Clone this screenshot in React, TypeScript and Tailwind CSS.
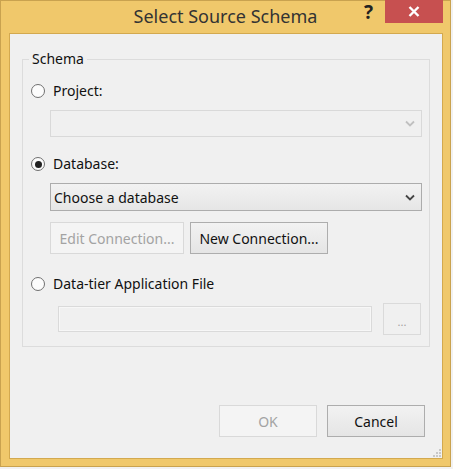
import React from "react";

const font = { fontFamily: '"Noto Sans", "Open Sans", sans-serif' };

function Radio({ checked, label }: { checked?: boolean; label: string }) {
	return (
		<div className="flex items-center h-[20px]">
			<span className="w-[14px] h-[14px] rounded-full border border-[#707070] bg-[#fcfcfc] flex items-center justify-center">
				{checked && <span className="w-[7px] h-[7px] rounded-full bg-[#222]" />}
			</span>
			<span className="ml-[8px] text-[14px] text-[#111] leading-[20px]">{label}</span>
		</div>
	);
}

function Chevron({ disabled }: { disabled?: boolean }) {
	return (
		<svg width="10" height="7" viewBox="0 0 10 7" className="mr-[6px]">
			<polyline
				points="1,1.5 5,5.5 9,1.5"
				fill="none"
				stroke={disabled ? "#c0c0c0" : "#444"}
				strokeWidth="1.8"
			/>
		</svg>
	);
}

export default function App() {
	return (
		<div className="w-[453px] h-[469px] bg-[#f2f2f2]" style={font}>
			<div className="w-[451px] h-[467px] bg-[#f0c86b] border border-[#c9a24f] flex flex-col">
				{/* Title bar */}
				<div className="h-[32px] grid grid-cols-[1fr_auto_1fr]">
					<div />
					<div className="text-[18px] text-[#333] leading-[28px] pt-[1px]">
						Select Source Schema
					</div>
					<div className="flex justify-end items-start">
						<span className="text-[19px] font-bold text-[#222] leading-[22px] mr-[12px]">
							?
						</span>
						<button
							type="button"
							className="w-[58px] h-[23px] bg-[#c75050] flex items-center justify-center mr-[7px] -mt-[1px]"
						>
							<svg width="12" height="11" viewBox="0 0 12 11">
								<path d="M1.5 1 L10.5 10 M10.5 1 L1.5 10" stroke="#fff" strokeWidth="2.4" />
							</svg>
						</button>
					</div>
				</div>

				{/* Client area */}
				<div className="relative ml-[8px] w-[434px] h-[426px] border border-[#d3a94f] bg-[#f0f0f0] flex flex-col">
					<fieldset className="mt-[15px] ml-[12px] w-[408px] border border-[#dcdcdc] pl-[8px] pr-[7px] pb-[11px] flex flex-col">
						<legend className="-ml-[2px] px-[3px] text-[14px] text-[#111] leading-[20px]">
							Schema
						</legend>

						<div className="mt-[12px]">
							<Radio label="Project:" />
						</div>
						<div className="mt-[9px] ml-[19px] w-[372px] h-[27px] border border-[#d9d9d9] bg-[#f0f0f0] flex items-center justify-end">
							<Chevron disabled />
						</div>

						<div className="mt-[17px]">
							<Radio checked label="Database:" />
						</div>
						<div className="mt-[9px] ml-[19px] w-[372px] h-[28px] border border-[#acacac] bg-gradient-to-b from-[#f2f2f2] to-[#e6e6e6] flex items-center justify-between">
							<span className="ml-[3px] text-[14px] text-[#111]">Choose a database</span>
							<Chevron />
						</div>

						<div className="mt-[11px] ml-[19px] flex gap-[6px]">
							<button
								type="button"
								className="w-[134px] h-[32px] border border-[#d9d9d9] bg-[#f4f4f4] text-[14px] text-[#a3a3a3]"
							>
								Edit Connection...
							</button>
							<button
								type="button"
								className="w-[138px] h-[32px] border border-[#adadad] bg-gradient-to-b from-[#f2f2f2] to-[#e5e5e5] text-[14px] text-[#111]"
							>
								New Connection...
							</button>
						</div>

						<div className="mt-[20px]">
							<Radio label="Data-tier Application File" />
						</div>
						<div className="mt-[9px] ml-[27px] h-[32px] flex items-center">
							<div className="w-[314px] h-[26px] border border-[#dadada] bg-[#f0f0f0] shadow-[inset_0_0_0_1px_#f7f7f7]" />
							<button
								type="button"
								className="ml-[11px] w-[38px] h-[32px] border border-[#dadada] bg-[#f0f0f0] text-[11px] text-[#a0a0a0] leading-none pt-[4px]"
							>
								...
							</button>
						</div>
					</fieldset>

					<div className="mt-auto mb-[21px] mr-[17px] flex justify-end gap-[10px]">
						<button
							type="button"
							className="w-[98px] h-[32px] border border-[#d9d9d9] bg-[#f4f4f4] text-[14px] text-[#a3a3a3]"
						>
							OK
						</button>
						<button
							type="button"
							className="w-[98px] h-[32px] border border-[#adadad] bg-gradient-to-b from-[#f2f2f2] to-[#e5e5e5] text-[14px] text-[#111]"
						>
							Cancel
						</button>
					</div>

					{/* resize grip */}
					<svg width="8" height="8" viewBox="0 0 8 8" className="absolute right-[1px] bottom-[1px]">
						<rect x="6" y="0" width="2" height="2" fill="#c8c8c8" />
						<rect x="3" y="3" width="2" height="2" fill="#c8c8c8" />
						<rect x="6" y="3" width="2" height="2" fill="#c8c8c8" />
						<rect x="0" y="6" width="2" height="2" fill="#c8c8c8" />
						<rect x="3" y="6" width="2" height="2" fill="#c8c8c8" />
						<rect x="6" y="6" width="2" height="2" fill="#c8c8c8" />
					</svg>
				</div>
			</div>
		</div>
	);
}
